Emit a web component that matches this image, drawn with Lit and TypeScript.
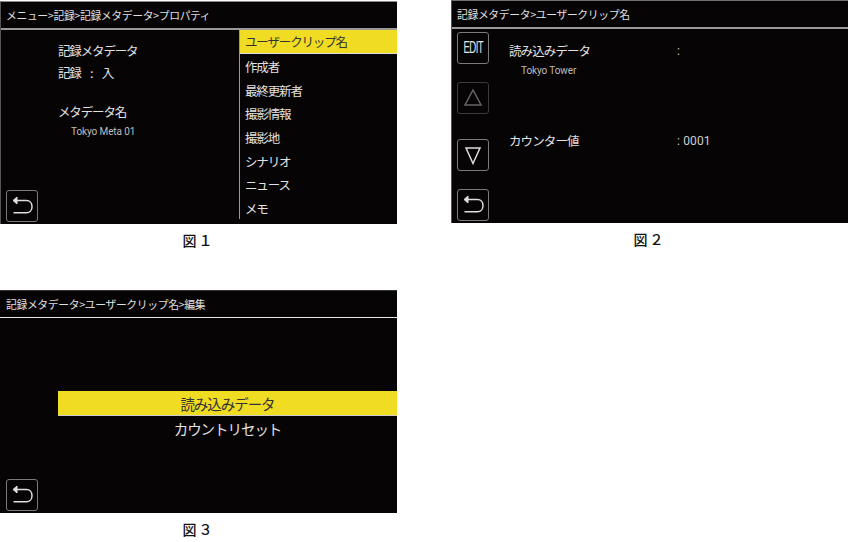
import { LitElement, html, css, svg } from "lit";
import { customElement } from "lit/decorators.js";

const backIcon = svg`<svg class="ic" viewBox="0 0 32 32" width="32" height="32" fill="none" stroke="#e0e0e0" stroke-width="1.500"><path d="M10 10.500H20.500c3.300 0 5.500 2.700 5.500 6.200s-2.200 6.100-5.500 6.100H7.500"/><path d="M11 7L7 10.500L11 14Z" fill="#e0e0e0" stroke-width="1"/></svg>`;

@customElement("app-root")
export class AppRoot extends LitElement {
  static styles = css`
    :host { display: block; width: 848px; height: 542px; background: #fff; overflow: hidden;
      font-family: "Noto Sans CJK JP", "Liberation Sans", sans-serif; }
    .page { display: grid; grid-template-columns: 397px 397px; column-gap: 54px; row-gap: 0; }
    .fig { display: flex; flex-direction: column; }
    .f1 { padding-top: 1px; height: 290px; box-sizing: border-box; }
    .f2 { height: 290px; box-sizing: border-box; }
    .screen { width: 397px; height: 223px; box-sizing: border-box; background: #070405; color: #e2e2e2;
      display: flex; flex-direction: column; border-left: 1px solid #555; border-top: 1px solid #8a8a8a; }
    .f2 .screen { border-top: 1px solid #6f6f6f; }
    .f3 .screen { border: none; border-top: 1px solid #333; }
    .bar { height: 26px; flex: none; padding-left: 5px; font-size: 10.800px; line-height: 26px; color: #e0e0e0;
      border-bottom: 2px solid #999; white-space: nowrap; letter-spacing: -0.350px; }
    .f3 .bar { border-bottom: 1px solid #e8e8e8; padding-left: 6px; }
    .body { flex: 1; min-height: 0; display: flex; }
    .left { flex: none; width: 238px; box-sizing: border-box; display: flex; flex-direction: column; padding: 0 0 2px 5px; }
    .info { flex: 1; padding: 11px 0 0 52px; font-size: 12.500px; line-height: 20px; letter-spacing: -1.150px; }
    .rec { margin-top: 2px; white-space: pre; word-spacing: 3px; }
    .gap { height: 19px; }
    .sub { font-family: Roboto, "Liberation Sans", sans-serif; font-size: 10px; letter-spacing: -0.100px; padding-left: 13px; line-height: 20px; color: #bdbdbd; }
    .rows .sub { padding-left: 11px; }
    .btn { width: 32px; height: 32px; box-sizing: border-box; border: 1px solid #7a7a7a; border-radius: 3px;
      display: flex; align-items: center; justify-content: center; color: #e6e6e6; flex: none; }
    .btn .ic { flex: none; margin: -1px; }
    .btn.dim { border-color: #3c3c3c; }
    .edit { font-family: "Liberation Sans", sans-serif; font-size: 16px; letter-spacing: -1px; transform: scaleX(.6); }
    .list { flex: 1; border-left: 1px solid #9a9a9a; margin-bottom: 5px; font-size: 12.500px; display: flex; flex-direction: column; letter-spacing: -1.150px; }
    .list div { height: 23.700px; line-height: 26px; padding-left: 5px; white-space: nowrap; }
    .list .on { background: #f0dc22; color: #333; height: 24px; line-height: 24px; border-bottom: 1px solid #ddd; box-sizing: border-box; }
    .cap { height: 31px; line-height: 32px; text-align: center; color: #111; font-weight: 500; font-size: 14px; letter-spacing: 2px; }
    .f2 .body { display: grid; grid-template-columns: 58px 1fr; }
    .rail { display: flex; flex-direction: column; padding: 3px 0 0 5px; }
    .rail .up { margin-top: 18px; }
    .rail .down { margin-top: 25px; }
    .rail .ret { margin-top: 18px; }
    .rows { padding: 12px 0 0 0; font-size: 12.500px; }
    .row { display: grid; grid-template-columns: 168px 1fr; line-height: 20px; letter-spacing: -0.900px; margin-left: -1px; }
    .count { margin-top: 50px; }
    .num { font-family: Roboto, sans-serif; font-size: 12px; letter-spacing: 0.150px; white-space: pre; color: #cfcfcf; }
    .f3 .body { flex-direction: column; padding: 0 0 2px 6px; }
    .menu { flex: 1; padding: 73px 0 0 52px; font-size: 14.500px; text-align: center; letter-spacing: -1.050px; }
    .menu div { height: 24.500px; line-height: 26px; }
    .menu .on { background: #f0dc22; color: #333; border-bottom: 1px solid #ccc; box-sizing: border-box; }
  `;

  render() {
    return html`<div class="page">
      <section class="fig f1">
        <div class="screen">
          <div class="bar">メニュー>記録>記録メタデータ>プロパティ</div>
          <div class="body">
            <div class="left">
              <div class="info">
                <div>記録メタデータ</div>
                <div class="rec">記録  :  入</div>
                <div class="gap"></div>
                <div>メタデータ名</div>
                <div class="sub">Tokyo Meta 01</div>
              </div>
              <div class="btn">${backIcon}</div>
            </div>
            <div class="list">
              <div class="on">ユーザークリップ名</div>
              <div>作成者</div><div>最終更新者</div><div>撮影情報</div><div>撮影地</div>
              <div>シナリオ</div><div>ニュース</div><div>メモ</div>
            </div>
          </div>
        </div>
        <div class="cap">図１</div>
      </section>
      <section class="fig f2">
        <div class="screen">
          <div class="bar">記録メタデータ>ユーザークリップ名</div>
          <div class="body">
            <div class="rail">
              <div class="btn"><span class="edit">EDIT</span></div>
              <div class="btn dim up"><svg class="ic" viewBox="0 0 32 32" width="32" height="32" fill="none" stroke="#666" stroke-width="1.500"><path d="M16 8L8 23H24Z"/></svg></div>
              <div class="btn down"><svg class="ic" viewBox="0 0 32 32" width="32" height="32" fill="none" stroke="#ddd" stroke-width="1.500"><path d="M16 24.500L9 9H23Z"/></svg></div>
              <div class="btn ret">${backIcon}</div>
            </div>
            <div class="rows">
              <div class="row"><span>読み込みデータ</span><span class="num">:</span></div>
              <div class="sub">Tokyo Tower</div>
              <div class="row count"><span>カウンター値</span><span class="num">: 0001</span></div>
            </div>
          </div>
        </div>
        <div class="cap">図２</div>
      </section>
      <section class="fig f3">
        <div class="screen">
          <div class="bar">記録メタデータ>ユーザークリップ名>編集</div>
          <div class="body">
            <div class="menu">
              <div class="on">読み込みデータ</div>
              <div>カウントリセット</div>
            </div>
            <div class="btn">${backIcon}</div>
          </div>
        </div>
        <div class="cap">図３</div>
      </section>
    </div>`;
  }
}
